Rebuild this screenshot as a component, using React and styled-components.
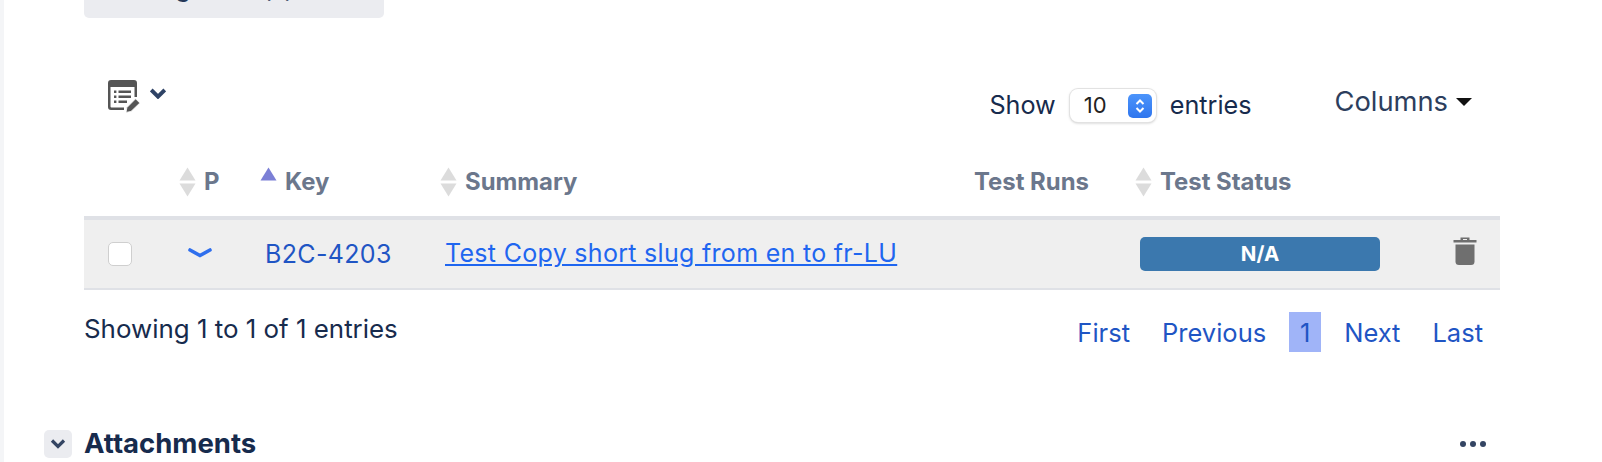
import React from "react";
import styled, { createGlobalStyle } from "styled-components";

const Global = createGlobalStyle`
  html, body {
    margin: 0;
    padding: 0;
    background: #fff;
    overflow: hidden;
  }
  body {
    font-family: Inter, "Liberation Sans", sans-serif;
    color: #172b4d;
  }
`;

const SortIcon = ({ active }) => (
  <svg width="17" height="30" viewBox="0 0 17 30">
    <path d="M8.5 0.5 L16.5 13.5 H0.5 Z" fill={active ? "#7b7fd6" : "#dcdcdc"} />
    {!active && <path d="M0.5 16.5 H16.5 L8.5 29.5 Z" fill="#dcdcdc" />}
  </svg>
);

const columns = [
  { label: "", sort: false },
  { label: "P", sort: true },
  { label: "Key", sort: true, active: true },
  { label: "Summary", sort: true },
  { label: "Test Runs" },
  { label: "Test Status", sort: true },
];

export default function App() {
  return (
    <Page>
      <Global />
      <Content>
        <TopButton>
          <CutLabel>Assign Test(s)</CutLabel>
        </TopButton>
        <Toolbar>
          <IconMenu>
            <svg width="33" height="33" viewBox="0 0 33 33">
              <path d="M3 0 H26 Q29 0 29 3 V17 H26.5 V7 H2.5 V26.5 Q2.5 27.5 3.5 27.5 H16 V30 H3 Q0 30 0 27 V3 Q0 0 3 0 Z" fill="#555" />
              <path d="M6 10.5h2.4v2.4H6zM10.5 10.5h12.5v2.4H10.5zM6 15.5h2.4v2.4H6zM10.5 15.5h12.5v2.4H10.5zM6 20.5h2.4v2.4H6zM10.5 20.5h8.5v2.4h-8.5z" fill="#555" />
              <path d="M18 32.4 L18.9 27.6 L27.6 18.8 L31.8 23 L23 31.4 Z" fill="#555" stroke="#fff" strokeWidth="0.8" />
            </svg>
            <Chevron width="16" height="11" viewBox="0 0 16 11">
              <path d="M1.2 2 L8 8.6 L14.8 2" />
            </Chevron>
          </IconMenu>
          <Controls>
            <ShowEntries>
              Show
              <FakeSelect>
                10
                <Stepper>
                  <svg width="12" height="18" viewBox="0 0 12 18">
                    <path d="M2.5 7 L6 3.5 L9.5 7 M2.5 11 L6 14.5 L9.5 11" />
                  </svg>
                </Stepper>
              </FakeSelect>
              entries
            </ShowEntries>
            <ColumnsButton>
              Columns
              <Caret />
            </ColumnsButton>
          </Controls>
        </Toolbar>
        <HeaderRow>
          {columns.map((c) => (
            <HeadCell key={c.label}>
              {c.sort && <SortIcon active={c.active} />}
              <span>{c.label}</span>
            </HeadCell>
          ))}
        </HeaderRow>
        <DataRow>
          <CheckCell>
            <Check />
          </CheckCell>
          <PriorityCell>
            <svg width="24" height="12" viewBox="0 0 24 12">
              <path d="M2 3 L12 8.5 L22 3" fill="none" stroke="#2f6fed" strokeWidth="3.6" strokeLinecap="round" />
            </svg>
          </PriorityCell>
          <KeyCell>B2C-4203</KeyCell>
          <SummaryCell>
            <a href="#test">Test Copy short slug from en to fr-LU</a>
          </SummaryCell>
          <StatusCell>
            <StatusBadge>N/A</StatusBadge>
          </StatusCell>
          <TrashCell>
            <svg width="24" height="28" viewBox="0 0 24 28">
              <path d="M7.5 3 V0.5 H16.5 V3 H23.5 V5.5 H0.5 V3 Z M10 3 H14 V2 H10 Z" fill="#6f6f6f" fillRule="evenodd" />
              <path d="M2.5 7.5 H21.5 V24.5 Q21.5 28 18 28 H6 Q2.5 28 2.5 24.5 Z" fill="#6f6f6f" />
            </svg>
          </TrashCell>
        </DataRow>
        <FooterRow>
          <Info>Showing 1 to 1 of 1 entries</Info>
          <Pager>
            <PageLink>First</PageLink>
            <PageLink>Previous</PageLink>
            <CurrentPage>1</CurrentPage>
            <PageLink>Next</PageLink>
            <PageLink>Last</PageLink>
          </Pager>
        </FooterRow>
        <Section>
          <SectionTitle>
            <Toggle>
              <svg width="16" height="12" viewBox="0 0 16 12">
                <path d="M2 2.5 L8 8.5 L14 2.5" fill="none" stroke="#344563" strokeWidth="3.2" />
              </svg>
            </Toggle>
            <h3>Attachments</h3>
          </SectionTitle>
          <More>
            <i />
            <i />
            <i />
          </More>
        </Section>
      </Content>
    </Page>
  );
}

const Page = styled.div`
  width: 1602px;
  height: 462px;
  overflow: hidden;
  box-sizing: border-box;
  border-left: 4px solid #f4f5f7;
  padding-left: 80px;
`;
const Content = styled.div`
  width: 1416px;
`;
const TopButton = styled.div`
  width: 300px;
  height: 18px;
  background: #ebecf0;
  border-radius: 0 0 5px 5px;
  overflow: hidden;
  display: flex;
  justify-content: flex-end;
  align-items: flex-end;
  box-sizing: border-box;
  padding-right: 90px;
`;
const CutLabel = styled.span`
  flex: none;
  font-size: 25px;
  line-height: 30px;
  margin-bottom: 15px;
  color: #253858;
`;
const Toolbar = styled.div`
  height: 142px;
  display: flex;
  justify-content: space-between;
`;
const IconMenu = styled.div`
  display: flex;
  align-items: flex-start;
  gap: 9px;
  padding: 62px 0 0 24px;
`;
const Chevron = styled.svg`
  margin-top: 8px;
  path {
    fill: none;
    stroke: #2f4366;
    stroke-width: 4;
  }
`;
const Controls = styled.div`
  display: flex;
  align-items: flex-start;
  gap: 83px;
  padding: 71px 28px 0 0;
`;
const ShowEntries = styled.div`
  display: flex;
  align-items: center;
  gap: 14px;
  font-size: 25.2px;
  line-height: 31px;
  color: #172b4d;
`;
const FakeSelect = styled.div`
  box-sizing: border-box;
  width: 86px;
  height: 33px;
  padding: 0 4px 0 14px;
  background: #fff;
  border-radius: 8px;
  box-shadow: 0 0 0 1px #e2e2e2, 0 1px 3px rgba(0, 0, 0, 0.25);
  display: flex;
  align-items: center;
  justify-content: space-between;
  font-size: 22px;
  color: #222;
`;
const Stepper = styled.span`
  width: 24px;
  height: 24px;
  border-radius: 5px;
  background: linear-gradient(#4c94fb, #2f76ee);
  display: flex;
  align-items: center;
  justify-content: center;
  path {
    fill: none;
    stroke: #fff;
    stroke-width: 2;
  }
`;
const ColumnsButton = styled.div`
  display: flex;
  align-items: center;
  gap: 8px;
  font-size: 27.3px;
  line-height: 30px;
  color: #2c3e5d;
  margin-top: -2px;
`;
const Caret = styled.span`
  width: 0;
  height: 0;
  border-left: 8px solid transparent;
  border-right: 8px solid transparent;
  border-top: 8px solid #111;
`;
const HeaderRow = styled.div`
  height: 60px;
  display: grid;
  grid-template-columns: 95px 81px 180px 534px 161px 1fr;
  border-bottom: 4px solid #dfe1e6;
  box-sizing: border-box;
  padding-bottom: 12px;
`;
const HeadCell = styled.div`
  display: flex;
  align-items: center;
  gap: 8px;
  font-size: 23.9px;
  font-weight: 700;
  color: #6b778c;
  span {
    margin-top: -2px;
  }
`;
const DataRow = styled.div`
  height: 70px;
  box-sizing: border-box;
  background: #efefef;
  border-bottom: 2px solid #dfe1e6;
  display: grid;
  grid-template-columns: 104px 77px 180px 695px 313px 1fr;
  align-items: center;
`;
const CheckCell = styled.div`
  padding-left: 24px;
`;
const Check = styled.div`
  width: 24px;
  height: 24px;
  box-sizing: border-box;
  background: #fff;
  border: 1px solid #cfcfcf;
  border-radius: 5px;
`;
const PriorityCell = styled.div`
  display: flex;
  margin-top: -3px;
`;
const KeyCell = styled.div`
  font-size: 25px;
  letter-spacing: 0.35px;
  margin-top: -1px;
  color: #1f55c4;
`;
const SummaryCell = styled.div`
  font-size: 25px;
  letter-spacing: 0.3px;
  margin-top: -2px;
  a {
    color: #1f66f0;
  }
`;
const StatusCell = styled.div`
  margin-top: -1px;
`;
const StatusBadge = styled.div`
  width: 240px;
  height: 34px;
  background: #3b78ae;
  border-radius: 5px;
  color: #fff;
  font-size: 20.5px;
  font-weight: 700;
  display: flex;
  align-items: center;
  justify-content: center;
`;
const TrashCell = styled.div`
  display: flex;
  margin-top: -7px;
`;
const FooterRow = styled.div`
  display: flex;
  justify-content: space-between;
  align-items: flex-start;
  height: 139px;
`;
const Info = styled.div`
  font-size: 25.9px;
  line-height: 30px;
  margin-top: 24px;
  color: #172b4d;
`;
const Pager = styled.div`
  display: flex;
  align-items: flex-start;
  gap: 32px;
  padding: 22px 17px 0 0;
`;
const PageLink = styled.span`
  font-size: 25.5px;
  line-height: 42px;
  color: #1f55c4;
`;
const CurrentPage = styled.span`
  width: 32px;
  height: 40px;
  margin: 0 -9px;
  background: #a0b4f8;
  font-size: 25.5px;
  line-height: 42px;
  text-align: center;
  color: #1f55c4;
`;
const Section = styled.div`
  display: flex;
  justify-content: space-between;
  align-items: center;
  margin-left: -40px;
  padding-top: 1px;
`;
const SectionTitle = styled.div`
  display: flex;
  align-items: center;
  gap: 12px;
  h3 {
    margin: -2px 0 0;
    font-size: 27.5px;
    line-height: 30px;
    font-weight: 700;
    color: #172b4d;
  }
`;
const Toggle = styled.div`
  width: 28px;
  height: 28px;
  border-radius: 5px;
  background: #ebecf0;
  display: flex;
  align-items: center;
  justify-content: center;
`;
const More = styled.div`
  display: flex;
  gap: 4px;
  padding-right: 14px;
  i {
    width: 6px;
    height: 6px;
    border-radius: 50%;
    background: #344563;
  }
`;
